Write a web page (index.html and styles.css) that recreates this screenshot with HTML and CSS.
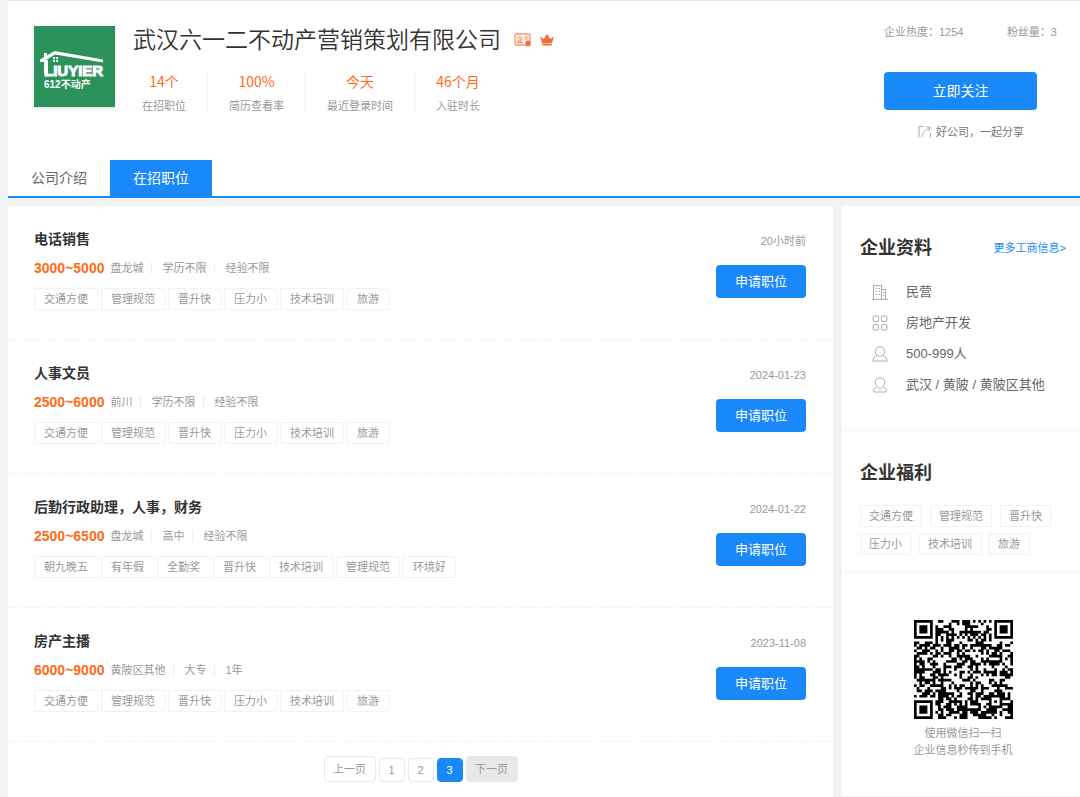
FILE: index.html
```html
<!DOCTYPE html>
<html lang="zh-CN">
<head>
<meta charset="utf-8">
<meta name="viewport" content="width=device-width, initial-scale=1">
<title>武汉六一二不动产营销策划有限公司</title>
<link rel="stylesheet" href="styles.css">
</head>
<body>
<header class="company">
  <div class="company-top">
    <svg class="logo" viewBox="0 0 81 81" role="img" aria-label="612不动产">
      <rect width="81" height="81" fill="#2a925a"/>
      <path d="M6 36V33.500L20.500 25 69 33.500V36.500L21 28.500 13 33.500V36Z" fill="#fff"/>
      <path d="M10 27h3v6h-3zM19 31h2v2h-2zM22 31h2v2h-2zM19 34h2v2h-2zM22 34h2v2h-2zM10 34h4v14h-4z" fill="#fff"/>
      <text class="logo-latin" x="10" y="50">LIUYIER</text>
      <text class="logo-cn" x="10" y="62">612不动产</text>
    </svg>
    <div class="company-main">
      <div class="company-name">
        <h1>武汉六一二不动产营销策划有限公司</h1>
        <svg class="badge-cert" viewBox="0 0 18 14" aria-hidden="true">
          <rect x="1" y="1" width="15" height="11" rx="1" fill="#fff3ec" stroke="#f79b76" stroke-width="1.300"/>
          <path d="M3 6 6 3.200 9 6M6 5v4M4.300 7v2.300M6 7h2M3 9.500h6M10.500 4h4M10.500 6h3" fill="none" stroke="#f58a60"/>
          <circle cx="14" cy="10" r="2.600" fill="#f2703c"/>
          <path d="m12.300 11.500-.5 2.200 2.200-1 2 1-.5-2.200z" fill="#f2703c"/>
        </svg>
        <svg class="badge-crown" viewBox="0 0 14 12" aria-hidden="true">
          <path d="M0 2.500 3.600 5 7 0l3.400 5L14 2.500 12 9H2zM2.200 9.500h9.600v2H2.200z" fill="#ee713d"/>
        </svg>
      </div>
      <dl class="stats">
        <div class="stat"><dt>在招职位</dt><dd>14个</dd></div>
        <div class="stat"><dt>简历查看率</dt><dd>100%</dd></div>
        <div class="stat"><dt>最近登录时间</dt><dd>今天</dd></div>
        <div class="stat"><dt>入驻时长</dt><dd>46个月</dd></div>
      </dl>
    </div>
    <div class="company-side">
      <div class="counts"><span>企业热度：1254</span><span>粉丝量：3</span></div>
      <button class="follow" type="button">立即关注</button>
      <a class="share" href="#share">
        <svg viewBox="0 0 14 12" aria-hidden="true"><path d="M5.500.5H1v11M3.500 11C4.500 7 7 4 12 2M8.500.8 12.500 1.500 10.500 5M12.500 7v4.500" fill="none" stroke="#aaa"/></svg>
        好公司，一起分享
      </a>
    </div>
  </div>
  <nav class="tabs">
    <a class="tab" href="#intro">公司介绍</a>
    <a class="tab active" href="#jobs" aria-current="page">在招职位</a>
  </nav>
</header>

<div class="content">
  <main class="jobs">
    <article class="job">
      <div class="job-info">
        <h2>电话销售</h2>
        <p class="meta"><strong>3000~5000</strong><span>盘龙城</span><span>学历不限</span><span>经验不限</span></p>
        <ul class="tags"><li>交通方便</li><li>管理规范</li><li>晋升快</li><li>压力小</li><li>技术培训</li><li>旅游</li></ul>
      </div>
      <div class="job-action"><time>20小时前</time><button class="apply" type="button">申请职位</button></div>
    </article>
    <article class="job">
      <div class="job-info">
        <h2>人事文员</h2>
        <p class="meta"><strong>2500~6000</strong><span>前川</span><span>学历不限</span><span>经验不限</span></p>
        <ul class="tags"><li>交通方便</li><li>管理规范</li><li>晋升快</li><li>压力小</li><li>技术培训</li><li>旅游</li></ul>
      </div>
      <div class="job-action"><time>2024-01-23</time><button class="apply" type="button">申请职位</button></div>
    </article>
    <article class="job">
      <div class="job-info">
        <h2>后勤行政助理，人事，财务</h2>
        <p class="meta"><strong>2500~6500</strong><span>盘龙城</span><span>高中</span><span>经验不限</span></p>
        <ul class="tags"><li>朝九晚五</li><li>有年假</li><li>全勤奖</li><li>晋升快</li><li>技术培训</li><li>管理规范</li><li>环境好</li></ul>
      </div>
      <div class="job-action"><time>2024-01-22</time><button class="apply" type="button">申请职位</button></div>
    </article>
    <article class="job">
      <div class="job-info">
        <h2>房产主播</h2>
        <p class="meta"><strong>6000~9000</strong><span>黄陂区其他</span><span>大专</span><span>1年</span></p>
        <ul class="tags"><li>交通方便</li><li>管理规范</li><li>晋升快</li><li>压力小</li><li>技术培训</li><li>旅游</li></ul>
      </div>
      <div class="job-action"><time>2023-11-08</time><button class="apply" type="button">申请职位</button></div>
    </article>
    <nav class="pager" aria-label="分页">
      <a class="page step" href="#prev">上一页</a>
      <a class="page" href="#p1">1</a>
      <a class="page" href="#p2">2</a>
      <a class="page current" href="#p3" aria-current="page">3</a>
      <button class="page step" type="button" disabled>下一页</button>
    </nav>
  </main>

  <aside class="sidebar">
    <section class="panel profile">
      <div class="panel-head"><h2>企业资料</h2><a href="#more">更多工商信息&gt;</a></div>
      <ul class="facts">
        <li><svg viewBox="0 0 16 16" aria-hidden="true"><path d="M1.500 15V1.500h8V15M9.500 5.500h4V15M0 15.300h16M3.500 4.500h1.500M6.500 4.500H8M3.500 7.500h1.500M6.500 7.500H8M3.500 10.500h1.500M6.500 10.500H8M11 8.500h1.500M11 11.500h1.500"/></svg>民营</li>
        <li><svg viewBox="0 0 16 16" aria-hidden="true"><rect x="1" y="1" width="5.500" height="5.500" rx="1.500"/><rect x="9.500" y="1" width="5.500" height="5.500" rx="1.500"/><rect x="1" y="9.500" width="5.500" height="5.500" rx="1.500"/><rect x="9.500" y="9.500" width="5.500" height="5.500" rx="1.500"/></svg>房地产开发</li>
        <li><svg viewBox="0 0 16 16" aria-hidden="true"><circle cx="8" cy="5.500" r="4.700"/><path d="M5 9.500C2.500 10.500 1 12.500 1 15h14c0-2.500-1.500-4.500-4-5.500"/></svg>500-999人</li>
        <li><svg viewBox="0 0 16 16" aria-hidden="true"><path d="M8 12.500C5.500 10 3.300 8 3.300 5.400a4.700 4.700 0 0 1 9.400 0C12.700 8 10.500 10 8 12.500ZM4 10.500l-2 1C.8 12.500 1 15 3 15h10c2 0 2.200-2.500 1-3.500l-2-1"/></svg>武汉 / 黄陂 / 黄陂区其他</li>
      </ul>
    </section>
    <section class="panel welfare">
      <h2>企业福利</h2>
      <ul class="tags"><li>交通方便</li><li>管理规范</li><li>晋升快</li><li>压力小</li><li>技术培训</li><li>旅游</li></ul>
    </section>
    <section class="panel wechat">
      <svg class="qr" viewBox="0 0 37 37" role="img" aria-label="二维码"><path id="qr-modules"/></svg>
      <p>使用微信扫一扫<br>企业信息秒传到手机</p>
    </section>
  </aside>
</div>
<script src="qr.js"></script>
</body>
</html>
```

FILE: styles.css
```css
* { box-sizing: border-box; }

body {
  margin: 0;
  padding: 0 0 0 8px;
  min-height: 100vh;
  display: flex;
  flex-direction: column;
  gap: 8px;
  background: #f2f2f2;
  color: #999;
  font: 11px/20px "Liberation Sans", "Noto Sans CJK SC", sans-serif;
}

h1, h2, p, ul, dl, dd { margin: 0; padding: 0; }
ul { list-style: none; }
a { color: inherit; text-decoration: none; }
button { font: inherit; border: 0; padding: 0; cursor: pointer; }
h2 { color: #333; font-weight: 700; }

.company {
  background: #fff;
  border-top: 1px solid #e5e5e5;
  border-bottom: 2px solid #1989fa;
}
.company-top {
  display: flex;
  align-items: flex-start;
  min-height: 159px;
  padding: 25px 23px 0 26px;
}
.logo {
  flex: none;
  width: 81px;
  height: 81px;
  margin-right: 18px;
  box-shadow: 0 1px 4px rgba(0, 0, 0, .15);
}
.logo-latin {
  font: 700 15px "Liberation Sans", sans-serif;
  fill: #fff;
  stroke: #fff;
  stroke-width: 1px;
}
.logo-cn { font: 700 10px "Liberation Sans", "Noto Sans CJK SC", sans-serif; fill: #fff; }
.company-main { flex: 1; }
.company-name { display: flex; align-items: center; }
.company-name h1 {
  color: #333;
  font-size: 23px;
  line-height: 28px;
  font-weight: 350;
}
.badge-cert { width: 18px; height: 14px; margin: 0 8px 0 13px; }
.badge-crown { width: 14px; height: 12px; }

.stats { display: flex; margin-top: 18px; font-family: "Noto Sans CJK SC", sans-serif; }
.stat {
  display: flex;
  flex-direction: column-reverse;
  gap: 6px;
  padding: 0 21px;
  text-align: center;
  line-height: 18px;
  border-left: 1px solid #f2f2f2;
}
.stat:first-child { padding-left: 9px; border-left: 0; }
.stat dd { color: #ff6b1a; font-size: 14px; }

.company-side { width: 173px; }
.counts { display: flex; justify-content: space-between; line-height: 12px; }
.follow {
  display: block;
  width: 153px;
  height: 38px;
  margin-top: 34px;
  border-radius: 4px;
  background: #1989fa;
  color: #fff;
  font-size: 14px;
}
.share {
  display: flex;
  align-items: center;
  gap: 4px;
  margin: 12px 0 0 34px;
  color: #777;
}
.share svg { width: 14px; height: 12px; }

.tabs { display: flex; }
.tab {
  width: 102px;
  line-height: 36px;
  text-align: center;
  font-size: 14px;
  color: #666;
}
.tab.active { background: #1989fa; color: #fff; }

.content { flex: 1; display: flex; gap: 9px; }
.jobs { flex: 1; background: #fff; }
.job {
  display: flex;
  justify-content: space-between;
  padding: 23px 27px 29px 26px;
  border-bottom: 1px dashed #f2f2f2;
}
.job h2 { font-size: 14px; }
.meta { display: flex; align-items: center; margin: 9px 0 10px; }
.meta strong { color: #ff6b1a; font-size: 14px; margin-right: 6px; }
.meta span + span {
  margin-left: 8px;
  padding-left: 10px;
  border-left: 1px solid #eee;
  line-height: 12px;
}
.tags { display: flex; flex-wrap: wrap; gap: 3px; }
.tags li { padding: 0 9px; border: 1px solid #f2f2f2; }
.job-action { display: flex; flex-direction: column; align-items: flex-end; gap: 14px; padding-top: 2px; }
.apply {
  width: 90px;
  height: 33px;
  border-radius: 4px;
  background: #1989fa;
  color: #fff;
  font-size: 13px;
}

.pager {
  display: flex;
  justify-content: center;
  align-items: flex-end;
  gap: 3px;
  padding: 14px 0 15px;
}
.page {
  width: 26px;
  height: 24px;
  line-height: 22px;
  text-align: center;
  border: 1px solid #e8e8e8;
  border-radius: 4px;
}
.page.step { width: 52px; height: 26px; line-height: 24px; }
.page.current { background: #1989fa; border-color: #1989fa; color: #fff; }
.page:disabled { background: #e8e8e8; color: #999; }

.sidebar { width: 238px; background: #fff; }
.panel { padding: 0 14px 0 18px; border-bottom: 1px solid #f5f5f5; }
.panel h2 { font-size: 18px; line-height: 24px; }
.profile { padding-top: 30px; padding-bottom: 30px; }
.panel-head { display: flex; justify-content: space-between; align-items: center; }
.panel-head a { color: #1989fa; }
.facts { padding: 16px 0 0 12px; }
.facts li { display: flex; align-items: center; gap: 18px; line-height: 31px; font-size: 13px; color: #666; }
.facts svg { width: 16px; height: 16px; fill: none; stroke: #aaa; }
.welfare { padding-top: 30px; padding-bottom: 17px; }
.welfare .tags { gap: 6px 8px; margin-top: 20px; }
.welfare .tags li { padding: 0 8px; }
.wechat { padding-top: 47px; padding-bottom: 37px; text-align: center; line-height: 17px; }
.qr { display: block; width: 99px; height: 99px; margin: 0 auto 6px; }
```

FILE: qr.js
```js
// Fills the 37x37 code: three finders, one alignment mark, timing lines, data.
const size = 37;
let seed = 199;

function random() {
  seed = (seed * 1103515245 + 12345) % 2147483648;
  return seed / 2147483648;
}

function ring(x, y, cx, cy) {
  return Math.max(Math.abs(x - cx), Math.abs(y - cy));
}

function isDark(x, y) {
  const data = random() < 0.52;
  for (const [cx, cy] of [[3, 3], [33, 3], [3, 33]]) {
    const r = ring(x, y, cx, cy);
    if (r <= 4) return r !== 2 && r !== 4;
  }
  const a = ring(x, y, 30, 30);
  if (a <= 2) return a !== 1;
  if (x === 6) return y % 2 === 0;
  if (y === 6) return x % 2 === 0;
  return data;
}

let d = "";
for (let y = 0; y < size; y++) {
  for (let x = 0; x < size; x++) {
    if (isDark(x, y)) d += `M${x} ${y}h1v1h-1z`;
  }
}
document.getElementById("qr-modules").setAttribute("d", d);
```
